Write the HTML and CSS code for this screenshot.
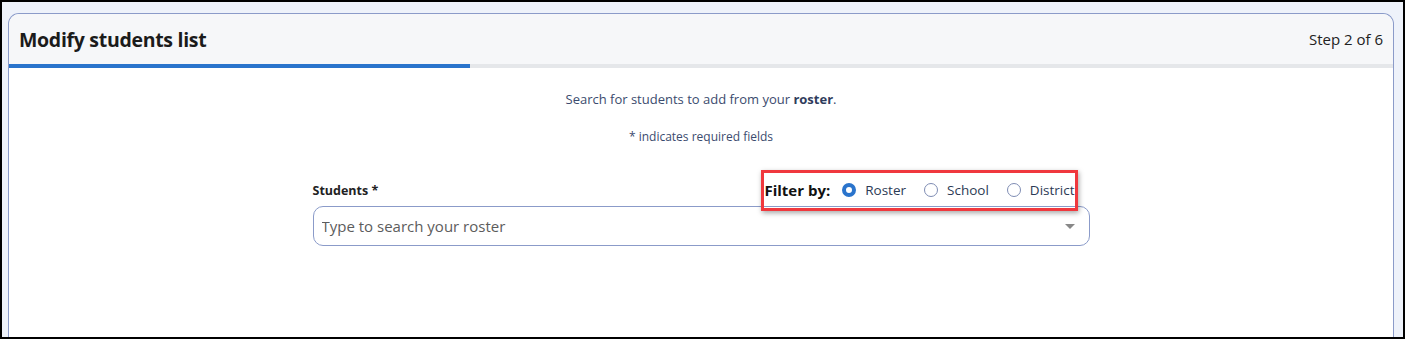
FILE: index.html
```html
<!DOCTYPE html>
<html lang="en">
<head>
    <meta charset="UTF-8">
    <meta name="viewport" content="width=device-width, initial-scale=1.0">
    <title>Modify students list</title>
    <link rel="stylesheet" href="styles.css">
</head>
<body>
    <div class="frame">
        <div class="card">
            <div class="card-header">
                <h1>Modify students list</h1>
                <span class="step">Step 2 of 6</span>
            </div>
            <div class="progress"><div class="progress-fill" style="width: 33.3%"></div></div>

            <div class="card-body">
                <p class="intro">Search for students to add from your <b>roster</b>.</p>
                <p class="required">* indicates required fields</p>

                <div class="field">
                    <div class="field-top">
                        <label for="students">Students *</label>
                        <div class="filter">
                            <span class="filter-label">Filter by:</span>
                            <label class="radio"><span class="dot checked"></span>Roster</label>
                            <label class="radio"><span class="dot"></span>School</label>
                            <label class="radio"><span class="dot"></span>District</label>
                        </div>
                    </div>
                    <div class="select">
                        <input type="text" id="students" placeholder="Type to search your roster">
                        <span class="caret"></span>
                    </div>
                </div>
            </div>
        </div>
    </div>
</body>
</html>
```

FILE: styles.css
```css
html, body {
    margin: 0;
    height: 100%;
}
body {
    font-family: "Open Sans", "Noto Sans", sans-serif;
    background: #000;
    padding: 2px;
    box-sizing: border-box;
    overflow: hidden;
}
.frame {
    background: #eef2fa;
    height: 100%;
    padding: 11px 9px 0 6px;
    box-sizing: border-box;
    overflow: hidden;
}
.card {
    background: #fff;
    border: 1px solid #8b9bc9;
    border-bottom: none;
    border-radius: 11px 11px 0 0;
    height: 400px;
    overflow: hidden;
}
.card-header {
    background: #f6f7f9;
    height: 50px;
    display: flex;
    align-items: center;
    justify-content: space-between;
    padding: 0 10px 0 10px;
}
.card-header h1 {
    margin: 0;
    font-size: 19.5px;
    font-weight: 700;
    color: #1b1b1b;
    letter-spacing: -0.3px;
}
.step {
    font-size: 15px;
    color: #222;
}
.progress {
    height: 4px;
    background: #e5e7ea;
}
.progress-fill {
    height: 100%;
    background: #2a74cc;
}
.card-body {
    display: flex;
    flex-direction: column;
    align-items: center;
}
.intro {
    margin: 22px 0 0;
    font-size: 13px;
    color: #3b4b6e;
}
.intro b {
    color: #2f3c5c;
}
.required {
    margin: 20px 0 0;
    font-size: 12px;
    color: #3b4b6e;
}
.field {
    width: 777px;
    margin: 30px 0 0 0;
}
.field-top {
    position: relative;
    z-index: 1;
    display: flex;
    justify-content: space-between;
    align-items: flex-end;
    height: 28px;
}
.field-top > label {
    font-size: 12.5px;
    font-weight: 700;
    color: #222;
    padding-bottom: 4px;
}
.filter {
    position: relative;
    display: flex;
    align-items: center;
    gap: 18px;
    margin-right: 15px;
    margin-bottom: 3px;
    font-size: 13.5px;
    color: #2c3a55;
}
.filter::after {
    content: "";
    position: absolute;
    left: -3px;
    right: -3px;
    top: -10px;
    bottom: -11px;
    border: 3px solid #f0383e;
    box-shadow: 1px 2px 5px rgba(0, 0, 0, 0.35);
}
.filter-label {
    font-weight: 700;
    font-size: 15px;
    color: #111;
    margin-right: -6px;
}
.radio {
    display: flex;
    align-items: center;
    gap: 9px;
}
.dot {
    width: 14px;
    height: 14px;
    border: 1px solid #7e8cb3;
    border-radius: 50%;
    box-sizing: border-box;
    background: #fff;
}
.dot.checked {
    border: 4px solid #2a74cc;
}
.select {
    position: relative;
    margin-top: 3px;
}
.select input {
    width: 100%;
    height: 40px;
    box-sizing: border-box;
    border: 1px solid #8b9bc9;
    border-radius: 10px;
    padding: 0 30px 0 8px;
    font-family: inherit;
    font-size: 15px;
    color: #222;
}
.select input::placeholder {
    color: #5c5c5c;
}
.caret {
    position: absolute;
    right: 15px;
    top: 18px;
    border-left: 5px solid transparent;
    border-right: 5px solid transparent;
    border-top: 5px solid #888;
}
```
